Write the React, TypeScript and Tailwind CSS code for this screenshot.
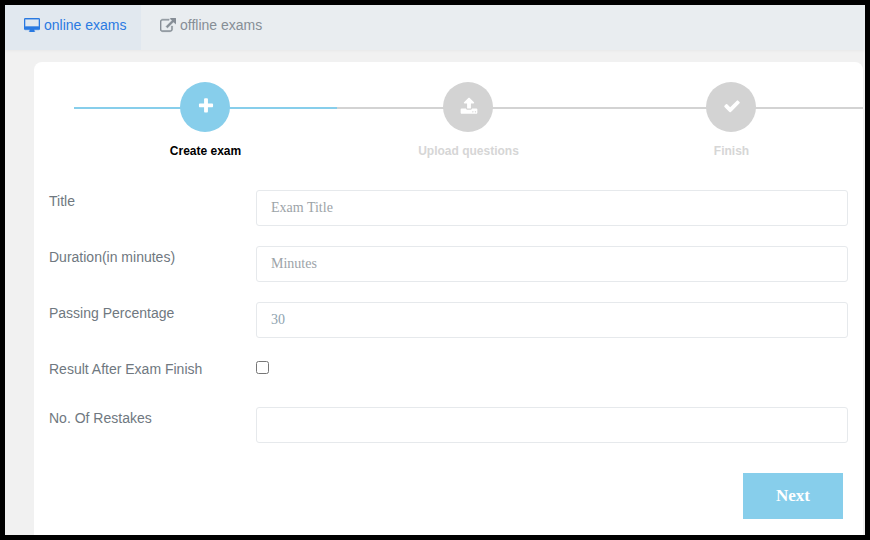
const sans = { fontFamily: '"Liberation Sans", Arial, sans-serif' };

function Fa({ d, box = "0 0 1792 1792", className, heavy }: { d: string; box?: string; className: string; heavy?: boolean }) {
  return (
    <svg
      viewBox={box}
      className={className}
      fill="currentColor"
      stroke={heavy ? "currentColor" : undefined}
      strokeWidth={heavy ? 50 : undefined}
      aria-hidden="true"
    >
      <path d={d} />
    </svg>
  );
}

const desktop =
  "M1792 992v-832q0-13-9.5-22.5t-22.5-9.5h-1600q-13 0-22.5 9.5t-9.5 22.5v832q0 13 9.5 22.5t22.5 9.5h1600q13 0 22.5-9.5t9.5-22.5zm128-832v1088q0 66-47 113t-113 47h-544q0 37 16 77.5t32 71 16 43.5q0 26-19 45t-45 19h-512q-26 0-45-19t-19-45q0-14 16-44t32-70 16-78h-544q-66 0-113-47t-47-113v-1088q0-66 47-113t113-47h1600q66 0 113 47t47 113z";
const external =
  "M1408 928v320q0 119-84.5 203.5t-203.5 84.5h-832q-119 0-203.5-84.5t-84.5-203.5v-832q0-119 84.5-203.5t203.5-84.5h704q14 0 23 9t9 23v64q0 14-9 23t-23 9h-704q-66 0-113 47t-47 113v832q0 66 47 113t113 47h832q66 0 113-47t47-113v-320q0-14 9-23t23-9h64q14 0 23 9t9 23zm384-864v512q0 26-19 45t-45 19-45-19l-176-176-652 652q-10 10-23 10t-23-10l-114-114q-10-10-10-23t10-23l652-652-176-176q-19-19-19-45t19-45 45-19h512q26 0 45 19t19 45z";
const plus =
  "M1600 736v192q0 40-28 68t-68 28h-416v416q0 40-28 68t-68 28h-192q-40 0-68-28t-28-68v-416h-416q-40 0-68-28t-28-68v-192q0-40 28-68t68-28h416v-416q0-40 28-68t68-28h192q40 0 68 28t28 68v416h416q40 0 68 28t28 68z";
const upload =
  "M1344 1472q0-26-19-45t-45-19-45 19-19 45 19 45 45 19 45-19 19-45zm256 0q0-26-19-45t-45-19-45 19-19 45 19 45 45 19 45-19 19-45zm128-224v320q0 40-28 68t-68 28h-1472q-40 0-68-28t-28-68v-320q0-40 28-68t68-28h427q21 56 70.5 92t110.5 36h256q61 0 110.5-36t70.5-92h427q40 0 68 28t28 68zm-325-648q-17 40-59 40h-256v448q0 26-19 45t-45 19h-256q-26 0-45-19t-19-45v-448h-256q-42 0-59-40-17-39 14-69l448-448q18-19 45-19t45 19l448 448q31 30 14 69z";
const check =
  "M1671 566q0 40-28 68l-724 724-136 136q-28 28-68 28t-68-28l-136-136-362-362q-28-28-28-68t28-68l136-136q28-28 68-28t68 28l294 295 656-657q28-28 68-28t68 28l136 136q28 28 28 68z";

const steps = [
  { label: "Create exam", icon: plus, active: true },
  { label: "Upload questions", icon: upload, active: false },
  { label: "Finish", icon: check, active: false },
];

function Step({ label, icon, active }: { label: string; icon: string; active: boolean }) {
  return (
    <div className="relative flex w-[263px] flex-col items-center pr-px">
      <div className={`absolute inset-x-0 top-[25px] h-[2px] ${active ? "bg-[#87ceeb]" : "bg-[#d3d3d3]"}`} />
      <div
        className={`relative z-10 flex h-[50px] w-[50px] items-center justify-center rounded-full text-white ${
          active ? "bg-[#87ceeb]" : "bg-[#d3d3d3]"
        }`}
      >
        <Fa d={icon} className="mb-[2px] ml-px h-[18px] w-[18px]" />
      </div>
      <div
        className={`mt-[12px] ml-px text-[12px] leading-[15px] font-bold ${active ? "text-black" : "text-[#d6d6d6]"}`}
      >
        {label}
      </div>
    </div>
  );
}

function Row({ label, placeholder, value }: { label: string; placeholder?: string; value?: string }) {
  return (
    <div className="mb-5 grid grid-cols-[207px_592px]">
      <label className="pt-px text-[14px] leading-[21px] text-[#6f7880]">{label}</label>
      <input
        readOnly
        placeholder={placeholder}
        value={value ?? ""}
        className="h-9 w-full rounded-[3px] border border-[#e6e9ec] bg-white px-[14px] text-[14px] text-[#8fa3b0] outline-none placeholder:text-[#9ca3a8]"
        style={{ fontFamily: '"Liberation Serif", "Times New Roman", serif' }}
      />
    </div>
  );
}

export default function App() {
  return (
    <div
      className="box-border flex h-[540px] w-[870px] flex-col overflow-hidden border-[5px] border-black bg-[#f1f1f1]"
      style={sans}
    >
      <div className="flex h-[45px] shrink-0 bg-[#e9edf0] shadow-[0_1px_3px_rgba(0,0,0,0.04)]">
        <div className="flex w-[136px] items-center gap-1 bg-[#e1e8ef] pl-[19px] text-[14px] text-[#2a7ae2]">
          <Fa d={desktop} box="0 0 1920 1664" className="mb-[5px] h-[14px] w-4" heavy />
          <span className="mb-[4px]">online exams</span>
        </div>
        <div className="flex items-center gap-1 pl-[19px] text-[14px] text-[#868e96]">
          <Fa d={external} className="mb-[4px] h-4 w-4" heavy />
          <span className="mb-[4px]">offline exams</span>
        </div>
      </div>

      <div className="flex-1 pt-3 pr-[2px] pl-[29px]">
        <div className="h-[calc(100%+16px)] rounded-lg bg-white pt-5">
          <div className="ml-10 flex">
            {steps.map((s) => (
              <Step key={s.label} {...s} />
            ))}
          </div>

          <form className="mt-[31px] px-[15px]">
            <Row label="Title" placeholder="Exam Title" />
            <Row label="Duration(in minutes)" placeholder="Minutes" />
            <Row label="Passing Percentage" value="30" />
            <div className="mb-5 grid h-[29px] grid-cols-[207px_592px]">
              <label className="pt-px text-[14px] leading-[21px] text-[#6f7880]">Result After Exam Finish</label>
              <div className="pt-[3px]">
                <input type="checkbox" className="block h-[13px] w-[13px]" />
              </div>
            </div>
            <Row label="No. Of Restakes" />
            <div className="mt-[30px] flex w-[799px] justify-end pr-[5px]">
              <button
                type="button"
                className="h-[46px] w-[100px] bg-[#87ceeb] text-[17px] font-bold text-white"
                style={{ fontFamily: '"Liberation Serif", "Times New Roman", serif' }}
              >
                Next
              </button>
            </div>
          </form>
        </div>
      </div>
    </div>
  );
}
